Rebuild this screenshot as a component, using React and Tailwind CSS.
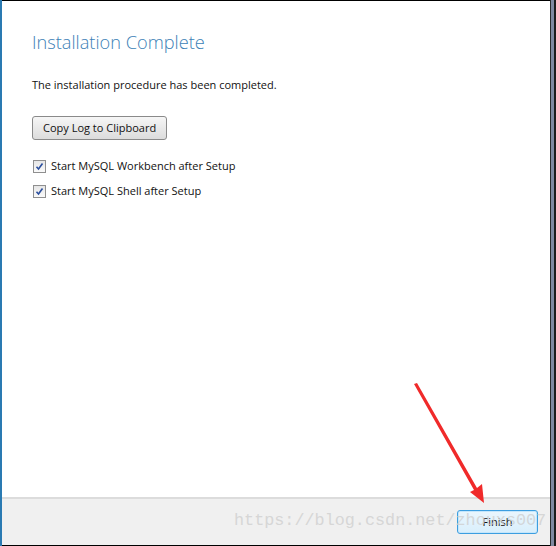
export default function App() {
  return (
    <div className="relative w-[556px] h-[546px] bg-black overflow-hidden" style={{ fontFamily: '"Open Sans", "Noto Sans", sans-serif' }}>
      <div className="absolute inset-0 flex">
        {/* left accent */}
        <div className="w-[2px] bg-[#2a7ab2]" />
        <div className="flex flex-col w-[548px] mt-[1px] mb-[1px] bg-white">
          <div className="flex-1 pl-[30px] pt-[30px]">
            <h1 className="text-[18.2px] leading-[22px] text-[#3c7fb6] font-light">Installation Complete</h1>
            <p className="mt-[24px] text-[11px] leading-[16px] text-[#111]">The installation procedure has been completed.</p>
            <button className="mt-[23px] h-[24px] px-[10px] border border-[#8a8a8a] rounded-[3px] bg-gradient-to-b from-[#f6f6f6] to-[#dcdcdc] text-[11px] text-[#111]">
              Copy Log to Clipboard
            </button>
            <div className="mt-[19px] flex flex-col gap-[11px]">
              {['Start MySQL Workbench after Setup', 'Start MySQL Shell after Setup'].map((t) => (
                <label key={t} className="flex items-center gap-[5px] text-[11px] leading-[14px] text-[#111]">
                  <span className="ml-[1px] w-[13px] h-[13px] border border-[#8f8f8f] bg-gradient-to-b from-[#e6e6e6] to-[#fafafa] flex items-center justify-center">
                    <svg width="9" height="9" viewBox="0 0 9 9">
                      <path d="M1.5 4.8 L3.5 7 L7.5 1.5" stroke="#2b4f9e" strokeWidth="1.6" fill="none" />
                    </svg>
                  </span>
                  {t}
                </label>
              ))}
            </div>
          </div>
          <div className="h-[48px] border-t-[2px] border-[#dcdcdc] bg-[#f0f0f0] flex items-center justify-end pr-[12px]">
            <button className="w-[81px] h-[24px] border border-[#3c9ee0] rounded-[3px] bg-gradient-to-b from-[#eaf6fd] to-[#d9effc] text-[11px] text-[#111] shadow-[inset_0_0_0_1px_#c5e6fb]">
              Finish
            </button>
          </div>
        </div>
        {/* right edge */}
        <div className="w-[1px] bg-[#2b2b2b]" />
        <div className="w-[3px] bg-[#8088a0]" />
        <div className="w-[2px] bg-[#1c1c1c]" />
      </div>
      {/* watermark */}
      <div className="absolute left-[234px] top-[509px] text-[16.8px] leading-[24px] text-[#cfcfcf]/80 pointer-events-none" style={{ fontFamily: '"Liberation Mono", "DejaVu Sans Mono", monospace' }}>
        https://blog.csdn.net/zhouxs007
      </div>
      {/* red arrow */}
      <svg className="absolute left-0 top-0 pointer-events-none" width="556" height="546">
        <polygon points="414,384 417,383 477,488 482,484 484,503 470,492 474,490" fill="#f02a2a" />
      </svg>
    </div>
  );
}
